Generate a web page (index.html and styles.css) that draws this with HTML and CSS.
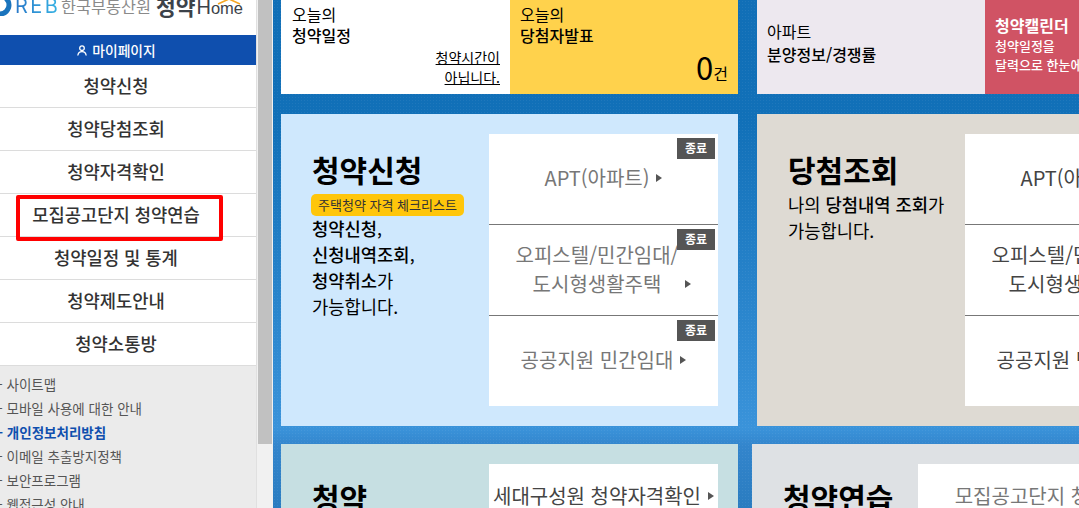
FILE: index.html
```html
<!DOCTYPE html>
<html lang="ko">
<head>
    <meta charset="UTF-8">
    <meta name="viewport" content="width=device-width, initial-scale=1.0">
    <title>청약Home</title>
    <link rel="stylesheet" href="styles.css">
</head>
<body>
    <aside class="sidebar">
        <div class="logo">
            <svg class="logo-ring" width="13" height="16" viewBox="0 0 13 16">
                <path d="M0 -4 A 9 9 0 0 1 0 14" fill="none" stroke="#1a74bd" stroke-width="5"/>
            </svg>
            <span class="logo-reb">REB</span>
            <span class="logo-org">한국부동산원</span>
            <span class="logo-home">청약</span>
            <span class="logo-word">H<small>ome</small>
                <svg class="logo-roof" width="24" height="5" viewBox="0 0 24 5">
                    <path d="M1 4 L12 -1 L23 4" fill="none" stroke="#f5a623" stroke-width="1.6"/>
                </svg>
            </span>
        </div>

        <a class="mypage" href="#">
            <svg width="10" height="11" viewBox="0 0 10 11">
                <circle cx="5" cy="3.2" r="2.3" fill="none" stroke="#fff" stroke-width="1.3"/>
                <path d="M0.8 10.5 C1.2 7.6 3 6.6 5 6.6 C7 6.6 8.8 7.6 9.2 10.5" fill="none" stroke="#fff" stroke-width="1.3"/>
            </svg>
            마이페이지
        </a>

        <ul class="menu">
            <li>청약신청</li>
            <li>청약당첨조회</li>
            <li>청약자격확인</li>
            <li class="marked">모집공고단지 청약연습</li>
            <li>청약일정 및 통계</li>
            <li>청약제도안내</li>
            <li>청약소통방</li>
        </ul>

        <ul class="links">
            <li>- 사이트맵</li>
            <li>- 모바일 사용에 대한 안내</li>
            <li class="strong">- 개인정보처리방침</li>
            <li>- 이메일 추출방지정책</li>
            <li>- 보안프로그램</li>
            <li>- 웹접근성 안내</li>
        </ul>
    </aside>

    <div class="scrollbar"><div class="scroll-thumb"></div></div>

    <main class="main">
        <section class="row row-top">
            <div class="pair">
                <div class="tile tile-white">
                    <p>오늘의<b>청약일정</b></p>
                    <a class="tile-note" href="#">청약시간이<br>아닙니다.</a>
                </div>
                <div class="tile tile-yellow">
                    <p>오늘의<b>당첨자발표</b></p>
                    <div class="tile-count"><em>0</em>건</div>
                </div>
            </div>
            <div class="pair">
                <div class="tile tile-lavender">
                    <p>아파트<b>분양정보/경쟁률</b></p>
                </div>
                <div class="tile tile-pink">
                    <b>청약캘린더</b>
                    <span>청약일정을<br>달력으로 한눈에</span>
                </div>
            </div>
        </section>

        <section class="row row-mid">
            <div class="panel panel-blue">
                <div class="intro">
                    <h2>청약신청</h2>
                    <a class="tag" href="#">주택청약 자격 체크리스트</a>
                    <p class="intro-text tight"><b>청약신청</b>,<br><b>신청내역조회</b>,<br><b>청약취소</b>가<br>가능합니다.</p>
                </div>
                <div class="cells">
                    <a class="cell" href="#"><i class="badge">종료</i><span>APT(아파트)</span><i class="arrow"></i></a>
                    <a class="cell" href="#"><i class="badge">종료</i><span>오피스텔/민간임대/<br>도시형생활주택</span><i class="arrow arrow-low"></i></a>
                    <a class="cell" href="#"><i class="badge">종료</i><span>공공지원 민간임대</span><i class="arrow"></i></a>
                </div>
            </div>
            <div class="panel panel-beige">
                <div class="intro">
                    <h2>당첨조회</h2>
                    <p class="intro-text">나의 <b>당첨내역 조회</b>가<br>가능합니다.</p>
                </div>
                <div class="cells cells-dark">
                    <a class="cell" href="#"><span>APT(아파트)</span><i class="arrow"></i></a>
                    <a class="cell" href="#"><span>오피스텔/민간임대/<br>도시형생활주택</span><i class="arrow arrow-low"></i></a>
                    <a class="cell" href="#"><span>공공지원 민간임대</span><i class="arrow"></i></a>
                </div>
            </div>
        </section>

        <section class="row row-bottom">
            <div class="panel panel-teal">
                <div class="intro intro-short"><h2>청약</h2></div>
                <div class="cells cells-open cells-dark">
                    <a class="cell" href="#"><span>세대구성원 청약자격확인</span><i class="arrow"></i></a>
                </div>
            </div>
            <div class="panel panel-grey">
                <div class="intro intro-short intro-narrow"><h2>청약연습</h2></div>
                <div class="cells cells-open cells-wide">
                    <a class="cell" href="#"><span>모집공고단지 청약연습</span><i class="arrow"></i></a>
                </div>
            </div>
        </section>
    </main>
</body>
</html>
```

FILE: styles.css
```css
*, *::after {
    box-sizing: border-box;
}

html, body {
    height: 508px;
}

body {
    margin: 0;
    display: flex;
    overflow: hidden;
    font-family: "Noto Sans CJK KR", "Noto Sans", sans-serif;
    color: #000;
    background: #fff;
}

a {
    color: inherit;
    text-decoration: none;
}

ul {
    list-style: none;
    margin: 0;
    padding: 0;
}

p {
    margin: 0;
}

i, em {
    font-style: normal;
}

/* sidebar */
.sidebar {
    width: 257px;
    flex: none;
    background: #ebebeb;
    border-right: 1px solid #e0e0e0;
    overflow: hidden;
}

.logo {
    height: 35px;
    background: #fff;
    display: flex;
    align-items: flex-start;
    overflow: hidden;
    white-space: nowrap;
}

.logo-ring {
    flex: none;
}

.logo-reb {
    margin: -8px 0 0 2px;
    width: 46px;
    font-family: "Inter", sans-serif;
    font-weight: 400;
    font-size: 20px;
    line-height: 28px;
    letter-spacing: 2.4px;
    background: linear-gradient(to right, #2a78c8, #35b5e5);
    -webkit-background-clip: text;
    background-clip: text;
    color: transparent;
}

.logo-org {
    font-size: 16.3px;
    line-height: 24px;
    margin-top: -6px;
    color: #8a8a8a;
}

.logo-home {
    margin: -9px 0 0 5px;
    font-weight: 700;
    font-size: 21.5px;
    line-height: 30px;
    color: #3c4249;
}

.logo-word {
    position: relative;
    margin: -6px 0 0 1px;
    font-family: "Liberation Sans", sans-serif;
    font-size: 20px;
    line-height: 26px;
    color: #3c4249;
}

.logo-word small {
    font-size: 16.5px;
}

.logo-roof {
    position: absolute;
    left: 21px;
    top: 6px;
}

.mypage {
    height: 30px;
    padding-right: 23px;
    display: flex;
    align-items: center;
    justify-content: center;
    gap: 5px;
    background: #0f4fae;
    color: #fff;
    font-size: 13.8px;
    font-weight: 500;
}

.menu li {
    position: relative;
    height: 43px;
    padding-right: 24px;
    background: #fff;
    border-bottom: 1px solid #dcdcdc;
    text-align: center;
    font-size: 17.7px;
    font-weight: 500;
    line-height: 40px;
    color: #333;
}

.marked::after {
    content: "";
    position: absolute;
    left: 16px;
    top: 1px;
    width: 207px;
    height: 46px;
    border: 4px solid #f00;
    border-radius: 2px;
    z-index: 1;
}

.links {
    padding-top: 6px;
    margin-left: -2px;
    font-size: 13.5px;
    line-height: 24px;
    color: #555;
}

.links .strong {
    color: #0f4fae;
    font-weight: 700;
}

.scrollbar {
    width: 16px;
    flex: none;
    padding-left: 1px;
    background: #f1f1f1;
}

.scroll-thumb {
    width: 14px;
    height: 444px;
    background: #c1c1c1;
}

/* main */
.main {
    flex: 1;
    min-width: 0;
    padding-left: 8px;
    overflow: hidden;
    background:
        radial-gradient(rgba(255, 255, 255, 0.06) 0.6px, transparent 1px) 0 0 / 3px 3px,
        linear-gradient(to bottom, #116fb7 0, #1170b8 120px, #3a93da 428px, #3385cc 446px, #2a7cc0 508px);
}

.row {
    display: flex;
    width: 960px;
}

.row-top {
    height: 94px;
    gap: 19px;
}

.row-mid {
    height: 312px;
    margin-top: 20px;
    gap: 19px;
}

.row-bottom {
    height: 200px;
    margin-top: 18px;
    gap: 14px;
}

.pair {
    display: flex;
    width: 457px;
    flex: none;
}

.tile {
    width: 229px;
    flex: none;
    padding: 4px 10px 4px 11px;
    font-size: 16px;
    line-height: 21px;
}

.tile p b {
    display: block;
    font-weight: 500;
}

.tile-white {
    background: #fff;
}

.tile-note {
    display: block;
    margin-top: 1px;
    text-align: right;
    font-size: 14px;
    line-height: 20px;
    text-decoration: underline;
}

.tile-yellow {
    width: 228px;
    padding-left: 10px;
    background: #ffd24c;
}

.tile-count {
    margin-top: 1px;
    text-align: right;
    font-size: 16px;
    line-height: 40px;
}

.tile-count em {
    font-size: 31px;
}

.tile-lavender {
    width: 228px;
    padding: 20px 10px 0;
    line-height: 23px;
    background: #ede8ef;
}

.tile-pink {
    width: 228px;
    padding: 14px 10px 0;
    background: #d05364;
    color: #fff;
}

.tile-pink b {
    display: block;
    font-size: 16px;
    font-weight: 700;
    line-height: 22px;
}

.tile-pink span {
    display: block;
    font-size: 13px;
    font-weight: 500;
    line-height: 19px;
    white-space: nowrap;
}

.panel {
    width: 457px;
    flex: none;
    display: flex;
    padding: 20px;
}

.panel-blue { background: #cfe8fd; }
.panel-beige { background: #dedad3; }
.panel-teal { background: #c6dfe2; }
.panel-grey { width: 442px; background: #dee1e4; }

.intro {
    width: 188px;
    flex: none;
    padding: 15px 0 0 11px;
}

.intro-short {
    padding-top: 13px;
}

.intro-narrow {
    width: 146px;
}

.intro h2 {
    margin: 0;
    font-size: 30px;
    font-weight: 700;
    line-height: 40px;
    white-space: nowrap;
}

.tag {
    display: block;
    width: 153px;
    height: 22px;
    margin: 5px 0 0 -1px;
    border-radius: 5px;
    background: #ffc60b;
    text-align: center;
    font-size: 13px;
    line-height: 21px;
    color: #333;
}

.intro-text {
    margin-top: 2px;
    font-size: 17.7px;
    line-height: 26px;
    white-space: nowrap;
}

.intro-text.tight {
    margin-top: -1px;
}

.intro-text b {
    font-weight: 500;
}

.cells {
    width: 229px;
    flex: none;
    display: grid;
    grid-template-rows: 91px 91px 90px;
    background: #fff;
    color: #777;
}

.cells-dark {
    color: #444;
}

.cells-open {
    display: block;
    height: 200px;
}

.cells-wide {
    width: 276px;
    color: #777;
}

.cell {
    position: relative;
    display: flex;
    align-items: center;
    justify-content: center;
    gap: 7px;
    padding-bottom: 3px;
    border-bottom: 1px solid #777;
    text-align: center;
    font-size: 20px;
    line-height: 29px;
    white-space: nowrap;
}

.cell:last-child {
    border-bottom: none;
}

.cells-open .cell {
    height: 66px;
}

.arrow {
    width: 0;
    height: 0;
    border-left: 6px solid #555;
    border-top: 4px solid transparent;
    border-bottom: 4px solid transparent;
}

.arrow-low {
    margin-top: 30px;
}

.badge {
    position: absolute;
    top: 4px;
    right: 3px;
    width: 38px;
    height: 21px;
    background: #555;
    color: #fff;
    font-size: 12px;
    font-weight: 700;
    line-height: 20px;
}
```
